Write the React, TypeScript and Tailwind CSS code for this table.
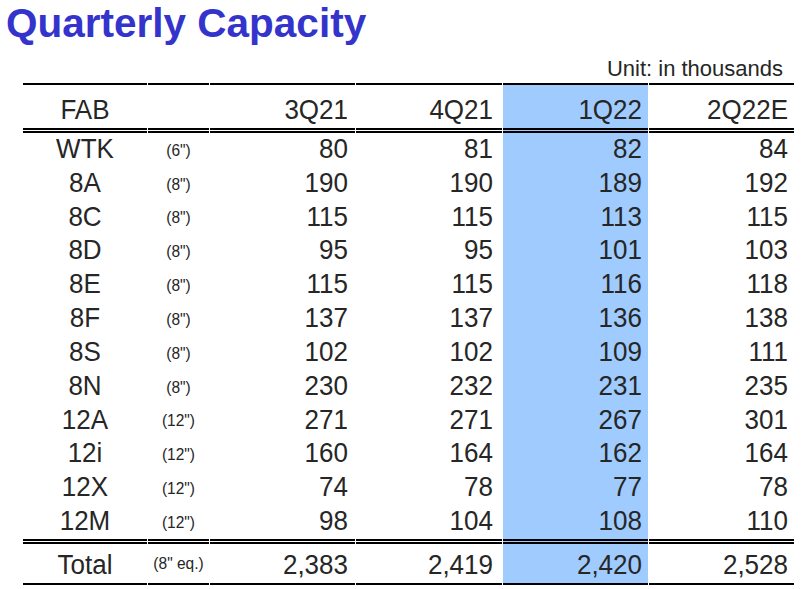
import React from "react";

type Row = { fab: string; size: string; v: [string, string, string, string] };

const rows: Row[] = [
  { fab: "WTK", size: '(6")', v: ["80", "81", "82", "84"] },
  { fab: "8A", size: '(8")', v: ["190", "190", "189", "192"] },
  { fab: "8C", size: '(8")', v: ["115", "115", "113", "115"] },
  { fab: "8D", size: '(8")', v: ["95", "95", "101", "103"] },
  { fab: "8E", size: '(8")', v: ["115", "115", "116", "118"] },
  { fab: "8F", size: '(8")', v: ["137", "137", "136", "138"] },
  { fab: "8S", size: '(8")', v: ["102", "102", "109", "111"] },
  { fab: "8N", size: '(8")', v: ["230", "232", "231", "235"] },
  { fab: "12A", size: '(12")', v: ["271", "271", "267", "301"] },
  { fab: "12i", size: '(12")', v: ["160", "164", "162", "164"] },
  { fab: "12X", size: '(12")', v: ["74", "78", "77", "78"] },
  { fab: "12M", size: '(12")', v: ["98", "104", "108", "110"] },
];

const gridCols =
  "grid grid-cols-[124px_61px_145px_146px_145px_145px] gap-x-px";

function T({ children }: { children: React.ReactNode }) {
  return <span className="inline-block scale-y-[1.06]">{children}</span>;
}

export default function App() {
  return (
    <div className="w-[808px] h-[589px] overflow-hidden bg-white font-['Liberation_Sans',Arial,sans-serif] text-[#262626]">
      <div className="h-[46px] pt-[1px] pl-[6px] text-[40.5px] font-bold leading-[44px] text-[#3434cc]">
        Quarterly Capacity
      </div>
      <div className="flex h-[37px] items-end justify-end pb-[1px] pr-[25px] text-[22px] leading-[26px]">
        Unit: in thousands
      </div>

      <div className="ml-[23px] w-[771px]">
        {/* header */}
        <div className={`${gridCols} text-[26px]`}>
          {["FAB", "", "3Q21", "4Q21", "1Q22", "2Q22E"].map((h, i) => (
            <div
              key={i}
              className={[
                "h-[50px] border-t-2 border-b-[5px] border-double border-black pt-[6px] leading-[37px]",
                i === 0 ? "text-center" : "",
                i === 1 ? "text-center" : "",
                i === 2 ? "text-right pr-[7px]" : "",
                i === 3 ? "text-right pr-[9px]" : "",
                i === 4 ? "text-right pr-[6px] bg-[#a0cbff]" : "",
                i === 5 ? "text-right pr-[6px]" : "",
              ].join(" ")}
            >
              <T>{h}</T>
            </div>
          ))}
        </div>

        {/* data rows */}
        {rows.map((r) => (
          <div key={r.fab} className={`${gridCols} text-[26px]`}>
            <div className="h-[33.83px] text-center leading-[33.83px]">
              <T>{r.fab}</T>
            </div>
            <div className="flex h-[33.83px] items-center justify-center pt-[1px] text-[15.5px]">
              <T>{r.size}</T>
            </div>
            <div className="h-[33.83px] pr-[7px] text-right leading-[33.83px]">
              <T>{r.v[0]}</T>
            </div>
            <div className="h-[33.83px] pr-[9px] text-right leading-[33.83px]">
              <T>{r.v[1]}</T>
            </div>
            <div className="h-[33.83px] bg-[#a0cbff] pr-[6px] text-right leading-[33.83px]">
              <T>{r.v[2]}</T>
            </div>
            <div className="h-[33.83px] pr-[6px] text-right leading-[33.83px]">
              <T>{r.v[3]}</T>
            </div>
          </div>
        ))}

        {/* total */}
        <div className={`${gridCols} text-[26px]`}>
          <div className="h-[46px] border-t-[5px] border-b-2 border-double border-black pt-[1px] text-center leading-[38px]">
            <T>Total</T>
          </div>
          <div className="flex h-[46px] items-center justify-center border-t-[5px] border-b-2 border-double border-black pt-[1px] text-[15.5px]">
            <T>(8" eq.)</T>
          </div>
          <div className="h-[46px] border-t-[5px] border-b-2 border-double border-black pr-[7px] pt-[1px] text-right leading-[38px]">
            <T>2,383</T>
          </div>
          <div className="h-[46px] border-t-[5px] border-b-2 border-double border-black pr-[9px] pt-[1px] text-right leading-[38px]">
            <T>2,419</T>
          </div>
          <div className="h-[46px] border-t-[5px] border-b-2 border-double border-black bg-[#a0cbff] pr-[6px] pt-[1px] text-right leading-[38px]">
            <T>2,420</T>
          </div>
          <div className="h-[46px] border-t-[5px] border-b-2 border-double border-black pr-[6px] pt-[1px] text-right leading-[38px]">
            <T>2,528</T>
          </div>
        </div>
      </div>
    </div>
  );
}
